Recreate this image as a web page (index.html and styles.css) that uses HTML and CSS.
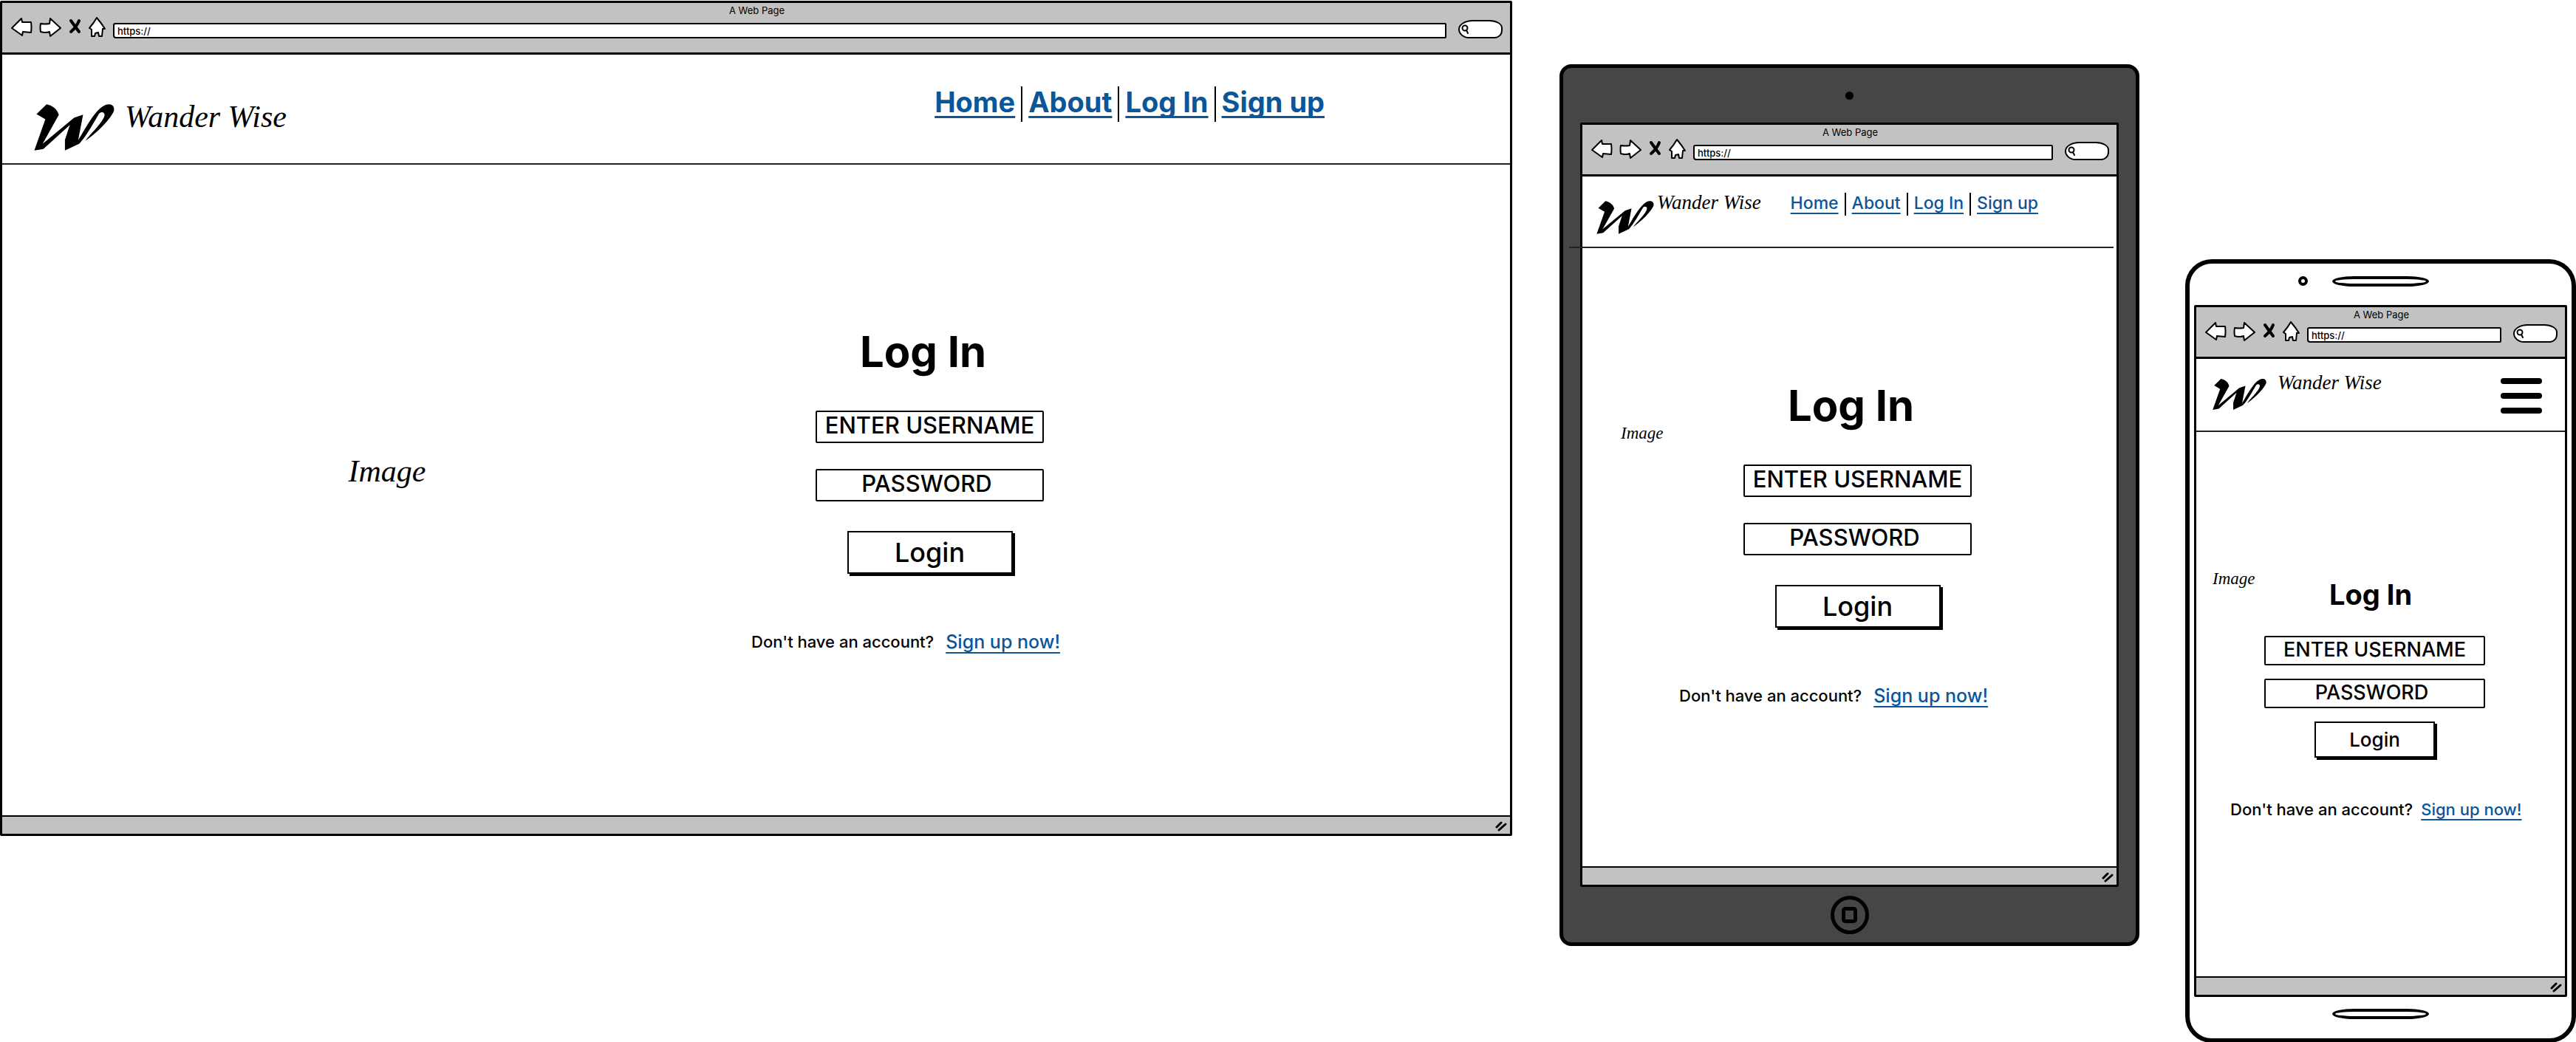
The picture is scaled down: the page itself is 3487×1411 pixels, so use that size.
FILE: index.html
```html
<!DOCTYPE html>
<html lang="en">
<head>
<meta charset="utf-8">
<title>Wander Wise – Log In</title>
<link rel="stylesheet" href="styles.css">
</head>
<body>
<svg class="sprite" width="0" height="0" aria-hidden="true">
  <symbol id="back" viewBox="15 22 29 30"><path d="M16 38 29 25l1 5 12 0q1 7 0 14l-11-1-1 5z"/></symbol>
  <symbol id="forward" viewBox="52 22 31 30"><path d="M54 32q6 1 12 0l1-7 14 13-14 11-1-6q-6 2-12 0-1-6 0-11z"/></symbol>
  <symbol id="stop" viewBox="93 22 17 30"><path class="bold" d="M96 28q5 7 11 15M107 28q-3 8-11 15"/></symbol>
  <symbol id="home" viewBox="118 22 25 30"><path d="M130 24q-4 7-10 14l3 2 0 9 4 0 1-4 4-1 1 5 4 0 1-10 3 0q-5-8-11-15z"/></symbol>
  <symbol id="lens" viewBox="0 0 12 14"><circle cx="5" cy="5" r="3.5"/><path d="M7 8l2 4"/></symbol>
  <symbol id="grip" viewBox="0 0 18 14"><path class="grip" d="M3 8 9 2M6 12l9-8"/></symbol>
  <symbol id="logo" viewBox="137 122 328 190"><path d="M147 163 188 123C212 128 232 142 238 166L172 284 300 178 337 165 317 270C345 225 395 125 440 123C460 121 467 138 462 152C450 180 400 235 347 271C365 245 425 190 425 165C423 152 410 153 403 160C385 190 350 255 322 283L263 311 263 268 283 207 175 305 138 311 183 184Z"/></symbol>
</svg>

<div class="board">
  <section class="window desktop">
    <div class="chrome">
      <p class="chrome-title">A Web Page</p>
      <div class="toolbar">
        <button class="tool" aria-label="Back"><svg width="29" height="30"><use href="#back"/></svg></button>
        <button class="tool" aria-label="Forward"><svg width="31" height="30"><use href="#forward"/></svg></button>
        <button class="tool" aria-label="Stop"><svg width="17" height="30"><use href="#stop"/></svg></button>
        <button class="tool" aria-label="Home"><svg width="25" height="30"><use href="#home"/></svg></button>
        <input class="url" type="text" value="https://" aria-label="Address">
        <label class="search"><svg width="12" height="14"><use href="#lens"/></svg><input type="text" aria-label="Search"></label>
      </div>
    </div>
    <header class="site-header">
      <svg class="logo" aria-hidden="true"><use href="#logo"/></svg>
      <span class="brand">Wander Wise</span>
      <nav class="nav">
        <a href="#">Home</a><a href="#">About</a><a href="#">Log In</a><a href="#">Sign up</a>
      </nav>
    </header>
    <main class="content">
      <div class="picture">Image</div>
      <div class="panel">
        <form class="login">
          <h1>Log In</h1>
          <input class="field" type="text" placeholder="ENTER USERNAME" aria-label="Username">
          <input class="field" type="password" placeholder="PASSWORD" aria-label="Password">
          <button class="submit" type="button">Login</button>
        </form>
        <p class="signup"><span>Don't have an account?</span><a href="#">Sign up now!</a></p>
      </div>
    </main>
    <footer class="status"><svg width="18" height="14" aria-hidden="true"><use href="#grip"/></svg></footer>
  </section>

  <div class="tablet-frame">
    <div class="tablet-top"><span class="tablet-camera"></span></div>
    <section class="window tablet">
      <div class="chrome">
        <p class="chrome-title">A Web Page</p>
        <div class="toolbar">
          <button class="tool" aria-label="Back"><svg width="29" height="30"><use href="#back"/></svg></button>
          <button class="tool" aria-label="Forward"><svg width="31" height="30"><use href="#forward"/></svg></button>
          <button class="tool" aria-label="Stop"><svg width="17" height="30"><use href="#stop"/></svg></button>
          <button class="tool" aria-label="Home"><svg width="25" height="30"><use href="#home"/></svg></button>
          <input class="url" type="text" value="https://" aria-label="Address">
          <label class="search"><svg width="12" height="14"><use href="#lens"/></svg><input type="text" aria-label="Search"></label>
        </div>
      </div>
      <header class="site-header">
        <svg class="logo" aria-hidden="true"><use href="#logo"/></svg>
        <span class="brand">Wander Wise</span>
        <nav class="nav">
          <a href="#">Home</a><a href="#">About</a><a href="#">Log In</a><a href="#">Sign up</a>
        </nav>
      </header>
      <main class="content">
        <div class="picture">Image</div>
        <div class="panel">
          <form class="login">
            <h1>Log In</h1>
            <input class="field" type="text" placeholder="ENTER USERNAME" aria-label="Username">
            <input class="field" type="password" placeholder="PASSWORD" aria-label="Password">
            <button class="submit" type="button">Login</button>
          </form>
          <p class="signup"><span>Don't have an account?</span><a href="#">Sign up now!</a></p>
        </div>
      </main>
      <footer class="status"><svg width="18" height="14" aria-hidden="true"><use href="#grip"/></svg></footer>
    </section>
    <div class="tablet-bottom">
      <button class="tablet-home" aria-label="Home button"><span></span></button>
    </div>
  </div>

  <div class="phone-frame">
    <div class="phone-top"><span class="phone-camera"></span><span class="speaker"></span></div>
    <section class="window phone">
      <div class="chrome">
        <p class="chrome-title">A Web Page</p>
        <div class="toolbar">
          <button class="tool" aria-label="Back"><svg width="29" height="30"><use href="#back"/></svg></button>
          <button class="tool" aria-label="Forward"><svg width="31" height="30"><use href="#forward"/></svg></button>
          <button class="tool" aria-label="Stop"><svg width="17" height="30"><use href="#stop"/></svg></button>
          <button class="tool" aria-label="Home"><svg width="25" height="30"><use href="#home"/></svg></button>
          <input class="url" type="text" value="https://" aria-label="Address">
          <label class="search"><svg width="12" height="14"><use href="#lens"/></svg><input type="text" aria-label="Search"></label>
        </div>
      </div>
      <header class="site-header">
        <svg class="logo" aria-hidden="true"><use href="#logo"/></svg>
        <span class="brand">Wander Wise</span>
        <button class="burger" aria-label="Menu"><span></span><span></span><span></span></button>
      </header>
      <main class="content">
        <div class="picture">Image</div>
        <div class="panel">
          <form class="login">
            <h1>Log In</h1>
            <input class="field" type="text" placeholder="ENTER USERNAME" aria-label="Username">
            <input class="field" type="password" placeholder="PASSWORD" aria-label="Password">
            <button class="submit" type="button">Login</button>
          </form>
          <p class="signup"><span>Don't have an account?</span><a href="#">Sign up now!</a></p>
        </div>
      </main>
      <footer class="status"><svg width="18" height="14" aria-hidden="true"><use href="#grip"/></svg></footer>
    </section>
    <div class="phone-bottom"><span class="speaker"></span></div>
  </div>
</div>
</body>
</html>
```
FILE: styles.css
```css
* { box-sizing: border-box; }

body {
  margin: 0;
  background: #fff;
  color: #000;
  font-family: Inter, "Open Sans", sans-serif;
  font-weight: 500;
}

h1, p { margin: 0; }

button, input {
  margin: 0;
  padding: 0;
  color: inherit;
  font-family: inherit;
  font-weight: inherit;
  border-radius: 0;
}

a {
  color: #0b5599;
  text-decoration-thickness: 2px;
  text-underline-offset: 5px;
  text-decoration-skip-ink: none;
}

.sprite { position: absolute; }

symbol path, symbol circle {
  fill: #fff;
  stroke: #000;
  stroke-width: 2;
  stroke-linejoin: round;
  stroke-linecap: round;
}

symbol .bold {
  fill: none;
  stroke-width: 4;
}

symbol .grip {
  fill: none;
  stroke-width: 3;
}

#logo path {
  fill: #000;
  stroke: none;
}

.board {
  display: grid;
  grid-template-columns: 2047fr 787fr 529fr;
  column-gap: 62px;
  align-items: start;
}

/* Browser window shared by every device */
.window {
  background: #fff;
  border: 3px solid #000;
  border-radius: 2px;
}

.chrome {
  height: 70px;
  padding: 2px 10px 0 12px;
  background: #c2c2c2;
  border-bottom: 3px solid #000;
}

.chrome-title {
  font-size: 13px;
  font-weight: 400;
  line-height: 16px;
  text-align: center;
}

.toolbar {
  display: flex;
  align-items: flex-end;
  gap: 9px;
}

.tool {
  display: block;
  background: none;
  border: 0;
}

.tool svg { display: block; }

.url {
  flex: 1;
  min-width: 0;
  height: 21px;
  padding-left: 4px;
  font-size: 13px;
  background: #fff;
  border: 2px solid #000;
  border-radius: 3px 2px 2px 4px;
}

.search {
  display: flex;
  align-items: center;
  width: 60px;
  height: 25px;
  margin-left: 7px;
  padding-left: 2px;
  background: #fff;
  border: 2px solid #000;
  border-radius: 22px 20px 12px 16px / 14px 12px 12px 14px;
}

.search input {
  width: 36px;
  height: 16px;
  background: none;
  border: 0;
}

.site-header {
  display: flex;
  align-items: flex-start;
  border-bottom: 2px solid #222;
}

.brand {
  font-family: "Liberation Serif", serif;
  font-style: italic;
  font-weight: 400;
  white-space: nowrap;
}

.nav {
  display: flex;
  margin-left: auto;
  white-space: nowrap;
}

.nav a + a { border-left: 2px solid #000; }

.content { display: grid; }

.picture {
  font-family: "Liberation Serif", serif;
  font-style: italic;
  font-weight: 400;
}

.login {
  display: flex;
  flex-direction: column;
  align-items: center;
}

.field {
  width: 100%;
  text-align: center;
  background: #fff;
  border: 2px solid #000;
  border-radius: 2px;
}

.field[type="password"] { padding-right: 8px; }

.field::placeholder {
  color: #000;
  opacity: 1;
}

.submit {
  background: #fff;
  border: 2px solid #000;
  box-shadow: 3px 3px 0 #000;
}

.signup {
  display: flex;
  align-items: center;
  line-height: 32px;
  white-space: nowrap;
}

.status {
  display: flex;
  justify-content: flex-end;
  height: 25px;
  padding: 6px 3px 0 0;
  background: #c2c2c2;
  border-top: 2px solid #000;
}

/* Desktop and tablet share the large form */
.desktop h1, .tablet h1 {
  margin-bottom: 44px;
  padding-right: 18px;
  font-size: 58px;
  line-height: 72px;
}

.desktop .login, .tablet .login {
  width: 309px;
  margin-left: 87px;
}

.desktop .field, .tablet .field {
  height: 44px;
  margin-bottom: 35px;
  padding-bottom: 6px;
  font-size: 31px;
}

.desktop .submit, .tablet .submit {
  width: 224px;
  height: 58px;
  margin-top: 5px;
  font-size: 36px;
}

.desktop .signup, .tablet .signup {
  gap: 16px;
  margin-top: 76px;
  font-size: 22px;
}

.desktop .signup a, .tablet .signup a { font-size: 25px; }

/* Desktop */
.desktop { margin-top: 1px; }

.desktop .site-header {
  height: 149px;
  padding: 43px 251px 0 43px;
}

.desktop .logo {
  width: 109px;
  height: 63px;
  margin-top: 24px;
}

.desktop .brand {
  margin: 17px 0 0 14px;
  font-size: 42px;
  line-height: 48px;
}

.desktop .nav a {
  height: 48px;
  padding: 0 8px;
  font-size: 38px;
  font-weight: 700;
  line-height: 42px;
  text-decoration-thickness: 3px;
}

.desktop .nav a:last-child, .tablet .nav a:last-child { padding-right: 0; }

.desktop .content {
  grid-template-columns: 1014fr 1027fr;
  padding: 217px 0 219px;
}

.desktop .picture {
  padding: 174px 0 0 28px;
  font-size: 42px;
  line-height: 48px;
  text-align: center;
}

/* Tablet */
.tablet-frame {
  margin: 87px 0 0 2px;
  padding: 0 23px;
  background: #464646;
  border: 5px solid #000;
  border-radius: 16px;
}

.tablet-top, .tablet-bottom {
  display: flex;
  align-items: center;
  justify-content: center;
}

.tablet-top { height: 74px; }
.tablet-bottom { height: 75px; }

.tablet-camera {
  width: 11px;
  height: 11px;
  background: #000;
  border-radius: 50%;
}

.tablet-home {
  display: flex;
  align-items: center;
  justify-content: center;
  width: 52px;
  height: 52px;
  background: none;
  border: 5px solid #000;
  border-radius: 50%;
}

.tablet-home span {
  width: 21px;
  height: 22px;
  border: 5px solid #000;
  border-radius: 5px;
}

.tablet .site-header {
  height: 97px;
  margin: 0 4px 0 -18px;
  padding: 19px 102px 0 37px;
}

.tablet .logo {
  width: 78px;
  height: 45px;
  margin-top: 14px;
}

.tablet .brand {
  margin-left: 4px;
  font-size: 27px;
  line-height: 32px;
}

.tablet .nav a {
  height: 31px;
  margin-top: 3px;
  padding: 0 8px;
  font-size: 23px;
  line-height: 28px;
}

.tablet .content {
  grid-template-columns: 131fr 592fr;
  padding: 177px 0 215px;
}

.tablet .picture {
  padding: 58px 0 0 52px;
  font-size: 23px;
  line-height: 32px;
}

/* Phone */
.phone-frame {
  margin-top: 351px;
  padding: 0 6px;
  border: 6px solid #000;
  border-radius: 36px;
}

.phone-top, .phone-bottom {
  display: grid;
  grid-template-columns: 1fr auto 1fr;
  align-items: center;
  height: 56px;
}

.phone-top { padding-bottom: 9px; }

.phone-camera {
  justify-self: end;
  width: 13px;
  height: 13px;
  margin-right: 33px;
  border: 4px solid #000;
  border-radius: 50%;
}

.speaker {
  grid-column: 2;
  width: 131px;
  height: 14px;
  border: 4px solid #000;
  border-radius: 30px / 7px;
}

.phone-bottom { padding-bottom: 10px; }

.phone .site-header {
  height: 99px;
  padding: 16px 31px 0 22px;
}

.phone .logo {
  width: 73px;
  height: 44px;
  margin-top: 10px;
}

.phone .brand {
  margin-left: 15px;
  font-size: 27px;
  line-height: 32px;
}

.burger {
  display: grid;
  gap: 12px;
  width: 56px;
  margin: 10px 0 0 auto;
  background: none;
  border: 0;
}

.burger span {
  height: 8px;
  background: #000;
  border-radius: 4px;
}

.phone .content { padding: 183px 0 210px; }

.phone .picture, .phone .panel { grid-area: 1 / 1; }

.phone .picture {
  padding-left: 22px;
  font-size: 23px;
  line-height: 32px;
}

.phone .panel { padding: 13px 0 0 46px; }

.phone .login {
  width: 299px;
  margin-left: 46px;
}

.phone h1 {
  margin-bottom: 32px;
  padding-right: 11px;
  font-size: 38px;
  line-height: 48px;
}

.phone .field {
  height: 40px;
  margin-bottom: 18px;
  padding-bottom: 4px;
  font-size: 27px;
}

.phone .submit {
  width: 163px;
  height: 49px;
  font-size: 26px;
}

.phone .signup {
  gap: 11px;
  margin-top: 54px;
  font-size: 22px;
}
```
